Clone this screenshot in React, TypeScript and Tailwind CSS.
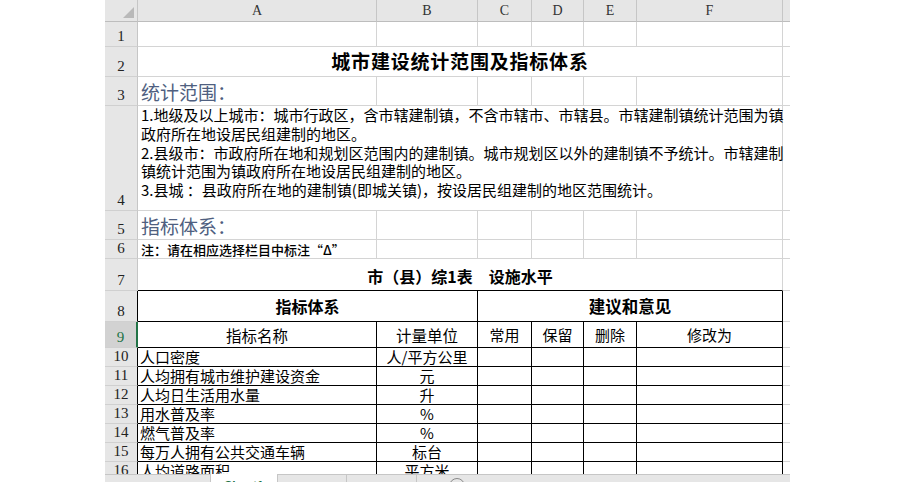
import React from "react";

const rows = [
  { n: 10, name: "人口密度", unit: "人/平方公里" },
  { n: 11, name: "人均拥有城市维护建设资金", unit: "元" },
  { n: 12, name: "人均日生活用水量", unit: "升" },
  { n: 13, name: "用水普及率", unit: "%" },
  { n: 14, name: "燃气普及率", unit: "%" },
  { n: 15, name: "每万人拥有公共交通车辆", unit: "标台" },
  { n: 16, name: "人均道路面积", unit: "平方米" },
];

function RowHead({ n, kind = "plain" }: { n: number; kind?: "plain" | "table" | "active" }) {
  const base =
    "flex items-end justify-center pb-[1px] border-b border-b-[#d0d0d0] text-[15px] leading-[17px] font-['Liberation_Serif',serif]";
  if (kind === "active")
    return <div className={`${base} bg-[#d2d2d2] text-[#217346] border-r-2 border-r-[#217346]`}>{n}</div>;
  if (kind === "table")
    return <div className={`${base} bg-[#e6e6e6] text-[#222] border-r border-r-black`}>{n}</div>;
  return <div className={`${base} bg-[#e6e6e6] text-[#222] border-r border-r-[#c6c6c6]`}>{n}</div>;
}

export default function App() {
  const gray = "border-r border-b border-[#d4d4d4]";
  const tail = "border-b border-[#d4d4d4]";
  const black = "border-r border-b border-black";

  return (
    <div className="w-[900px] h-[482px] bg-white overflow-hidden font-['Noto_Sans_CJK_SC',sans-serif] text-black">
      <div className="ml-[105px] w-[685px] h-[482px] flex flex-col overflow-hidden">
        <div className="h-[474px] shrink-0 overflow-hidden">
          <div className="grid grid-cols-[33px_239px_101px_54px_52px_53px_146px_7px] grid-rows-[22px_25px_30px_29px_105px_29px_19px_32px_31px_26px_19px_19px_19px_19px_19px_19px_19px]">
            {/* column headers */}
            <div className="relative bg-[#e6e6e6] border-r border-b border-r-[#c6c6c6] border-b-[#bdbdbd]">
              <svg className="absolute right-[3px] bottom-[3px]" width="11" height="11" viewBox="0 0 11 11">
                <polygon points="11,0 11,11 0,11" fill="#b9b9b9" />
              </svg>
            </div>
            {["A", "B", "C", "D", "E", "F"].map((l) => (
              <div
                key={l}
                className="flex items-center justify-center bg-[#e6e6e6] border-r border-b border-r-[#c6c6c6] border-b-[#bdbdbd] text-[14px] text-[#333] font-['Liberation_Serif',serif]"
              >
                {l}
              </div>
            ))}
            <div className="bg-[#e6e6e6] border-b border-b-[#bdbdbd]" />

            {/* row 1 */}
            <RowHead n={1} />
            <div className={gray} />
            <div className={gray} />
            <div className={gray} />
            <div className={gray} />
            <div className={gray} />
            <div className={gray} />
            <div className={tail} />

            {/* row 2 */}
            <RowHead n={2} />
            <div className={`${gray} col-span-6 flex items-center justify-center text-[19px] font-bold tracking-[0.8px]`}>
              城市建设统计范围及指标体系
            </div>
            <div className={tail} />

            {/* row 3 */}
            <RowHead n={3} />
            <div className={`${gray} flex items-end pl-[3px] pb-[1px] text-[19px] leading-[24px] text-[#4f5f80]`}>
              统计范围：
            </div>
            <div className={gray} />
            <div className={gray} />
            <div className={gray} />
            <div className={gray} />
            <div className={gray} />
            <div className={tail} />

            {/* row 4 */}
            <RowHead n={4} />
            <div className={`${gray} col-span-6 pl-[3px] text-[15px] leading-[18.8px] whitespace-nowrap`}>
              1.地级及以上城市：城市行政区，含市辖建制镇，不含市辖市、市辖县。市辖建制镇统计范围为镇
              <br />
              政府所在地设居民组建制的地区。
              <br />
              2.县级市：市政府所在地和规划区范围内的建制镇。城市规划区以外的建制镇不予统计。市辖建制
              <br />
              镇统计范围为镇政府所在地设居民组建制的地区。
              <br />
              3.县城 ：县政府所在地的建制镇(即城关镇)，按设居民组建制的地区范围统计。
            </div>
            <div className={tail} />

            {/* row 5 */}
            <RowHead n={5} />
            <div className={`${gray} flex items-center pl-[3px] pt-[1px] text-[19px] leading-[24px] text-[#4f5f80]`}>
              指标体系：
            </div>
            <div className={gray} />
            <div className={gray} />
            <div className={gray} />
            <div className={gray} />
            <div className={gray} />
            <div className={tail} />

            {/* row 6 */}
            <RowHead n={6} />
            <div className={`${gray} flex items-end pl-[3px] text-[13px] leading-[17px] font-medium whitespace-nowrap`}>
              注：请在相应选择栏目中标注“Δ”
            </div>
            <div className={gray} />
            <div className={gray} />
            <div className={gray} />
            <div className={gray} />
            <div className={gray} />
            <div className={tail} />

            {/* row 7 */}
            <RowHead n={7} />
            <div className="col-span-6 border-r border-r-[#d4d4d4] border-b border-b-black flex items-end justify-center pb-[3px] text-[16px] leading-[22px] font-bold">
              市（县）综1表　设施水平
            </div>
            <div className={tail} />

            {/* row 8 */}
            <RowHead n={8} kind="table" />
            <div className={`${black} col-span-2 flex items-center justify-center text-[16px] font-bold`}>指标体系</div>
            <div className={`${black} col-span-4 flex items-center justify-center text-[16.5px] font-bold`}>建议和意见</div>
            <div className={tail} />

            {/* row 9 */}
            <RowHead n={9} kind="active" />
            <div className={`${black} flex items-end justify-center text-[15.5px] leading-[22px] pb-[1px]`}>指标名称</div>
            <div className={`${black} flex items-end justify-center text-[15.5px] leading-[22px] pb-[1px]`}>计量单位</div>
            <div className={`${black} flex items-end justify-center text-[15px] leading-[22px] pb-[1px]`}>常用</div>
            <div className={`${black} flex items-end justify-center text-[15px] leading-[22px] pb-[1px]`}>保留</div>
            <div className={`${black} flex items-end justify-center text-[15px] leading-[22px] pb-[1px]`}>删除</div>
            <div className={`${black} flex items-end justify-center text-[15px] leading-[22px] pb-[1px]`}>修改为</div>
            <div className={tail} />

            {/* rows 10-16 */}
            {rows.map((r) => (
              <React.Fragment key={r.n}>
                <RowHead n={r.n} kind="table" />
                <div className={`${black} flex items-end pl-[2px] text-[15px] leading-[18px] whitespace-nowrap`}>{r.name}</div>
                <div className={`${black} flex items-end justify-center text-[15px] leading-[18px] whitespace-nowrap`}>{r.unit}</div>
                <div className={black} />
                <div className={black} />
                <div className={black} />
                <div className={black} />
                <div className={tail} />
              </React.Fragment>
            ))}
          </div>
        </div>

        {/* sheet tabs */}
        <div className="h-[26px] shrink-0 flex bg-[#e6e6e6] border-t border-[#c6c6c6] text-[12px] leading-[16px] font-['Liberation_Sans',sans-serif] text-[#444]">
          <div className="w-[105px] shrink-0" />
          <div className="w-[68px] shrink-0 bg-white border-x border-[#c6c6c6] -mt-px pt-[4px] text-center font-bold text-[#217346]">Sheet1</div>
          <div className="w-[69px] shrink-0 border-r border-[#c6c6c6] pt-[4px] text-center">Sheet2</div>
          <div className="w-[70px] shrink-0 border-r border-[#c6c6c6] pt-[4px] text-center">Sheet3</div>
          <div className="flex items-start pl-[32px] pt-[3px]">
            <div className="w-[16px] h-[16px] rounded-full border border-[#888]" />
          </div>
        </div>
      </div>
    </div>
  );
}
